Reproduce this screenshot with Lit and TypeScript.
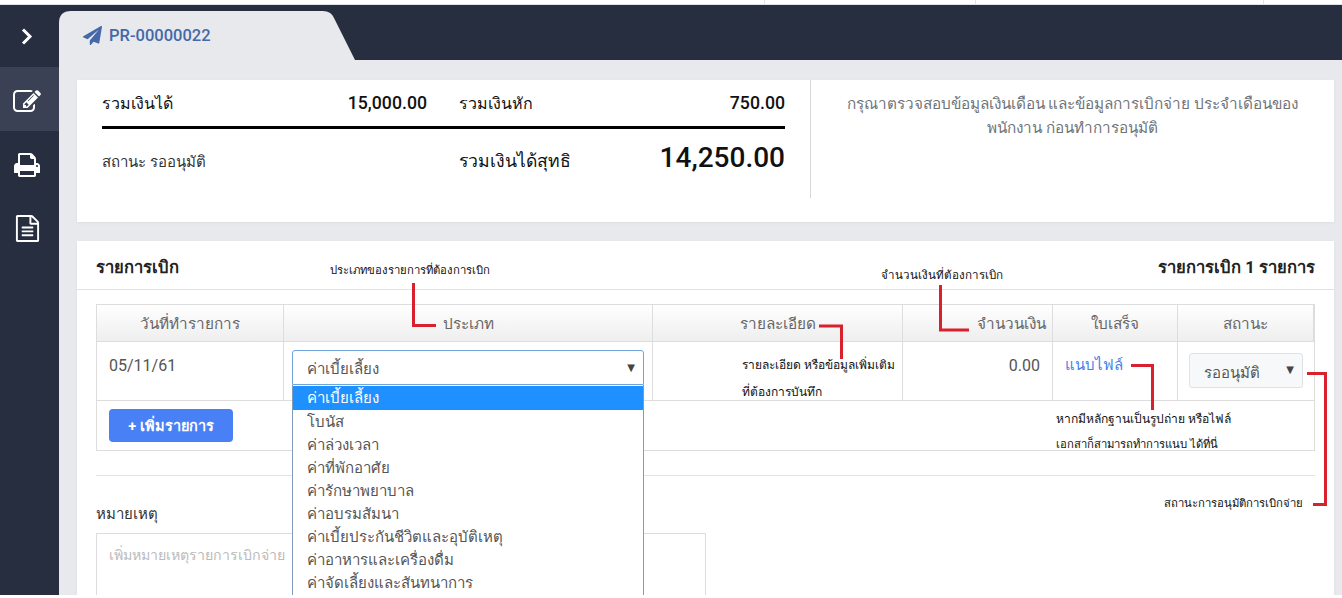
import { LitElement, html, css, svg } from "lit";
import { customElement } from "lit/decorators.js";

const OPTIONS = ["ค่าเบี้ยเลี้ยง","โบนัส","ค่าล่วงเวลา","ค่าที่พักอาศัย","ค่ารักษาพยาบาล","ค่าอบรมสัมนา","ค่าเบี้ยประกันชีวิตและอุบัติเหตุ","ค่าอาหารและเครื่องดื่ม","ค่าจัดเลี้ยงและสันทนาการ"];

const NOTES = [
  { x: 330, y: 261, s: 11.3, t: "ประเภทของรายการที่ต้องการเบิก" },
  { x: 881, y: 267, s: 11.6, t: "จำนวนเงินที่ต้องการเบิก" },
  { x: 742, y: 356, s: 12, t: "รายละเอียด หรือข้อมูลเพิ่มเติม" },
  { x: 742, y: 383, s: 12, t: "ที่ต้องการบันทึก" },
  { x: 1056, y: 410, s: 12.1, t: "หากมีหลักฐานเป็นรูปถ่าย หรือไฟล์" },
  { x: 1056, y: 435, s: 11.3, t: "เอกสาก็สามารถทำการแนบ ได้ที่นี่" },
  { x: 1164, y: 494, s: 11.3, t: "สถานะการอนุมัติการเบิกจ่าย" },
];

const LINES = [
  "413.5,283 413.5,325.5 436,325.5",
  "940.5,285 940.5,330 969,330",
  "819,326 841.5,326 841.5,359",
  "1131,365.5 1152.5,365.5 1152.5,410",
  "1307,373.5 1325.5,373.5 1325.5,504.5 1313,504.5",
];

@customElement("app-root")
export class AppRoot extends LitElement {
  static styles = css`
    :host { display: block; position: relative; width: 1342px; height: 598px; overflow: hidden; background: #fff;
      font-family: Roboto, "Noto Sans", sans-serif; color: #333; }
    .strip { height: 5px; box-sizing: border-box; border-bottom: 1px solid #dfe2e6; display: grid; grid-template-columns: 765px 211px 288px 1fr; }
    .strip i { border-right: 1px solid #dfe2e6; }
    .app { display: flex; height: 590px; overflow: hidden; }
    .side { width: 59px; flex: none; background: #272e40; display: flex; flex-direction: column; color: #fff; }
    .side div { height: 64px; box-sizing: border-box; display: flex; align-items: center; justify-content: center; padding: 4px 5px 0 0; }
    .side .toggle { height: 62px; padding-top: 0; }
    .side .on { background: #3a4155; padding-top: 5px; }
    .side .doc { padding-top: 2px; }
    .side svg { fill: #fff; }
    .main { flex: 1; min-width: 0; display: flex; flex-direction: column; background: #e7e9ed; }
    .tabs { height: 55px; flex: none; background: #272e40; display: flex; align-items: flex-end; }
    .tab { width: 296px; height: 49px; background: #e7e9ed; box-sizing: border-box; padding: 0 0 0 24px; display: flex; align-items: center; gap: 7px;
      clip-path: path("M0 49 L0 12 Q0 0 12 0 L264 0 Q272 0 275 7 L296 49 Z");
      color: #4468a8; font-weight: 500; font-size: 16.5px; }
    .tab svg { fill: #4468a8; }
    .content { flex: 1; padding: 20px 8px 0 18px; display: flex; flex-direction: column; gap: 19px; overflow: hidden; }
    .card { background: #fff; box-shadow: 0 1px 3px rgba(0,0,0,.05); }
    .sum { height: 142px; flex: none; display: flex; align-items: flex-start; }
    .sum-left { width: 683px; height: 118px; padding: 0 25px; display: grid; grid-template-columns: 325px 326px; column-gap: 32px; grid-template-rows: 46px 3px 1fr; align-content: start; flex: none; }
    .sum-right { flex: 1; height: 118px; box-sizing: border-box; border-left: 1px solid #d8d8d8; padding: 12px 29px 0; text-align: center; font-size: 15.3px; line-height: 24px; color: #6f7479; }
    .kv { display: flex; justify-content: space-between; align-items: center; color: #111; font-size: 16px; }
    .kv b { font-weight: 500; font-size: 17.7px; }
    .kv b.big { font-size: 28px; margin-top: -6px; }
    .rule { grid-column: 1 / 3; background: #000; }
    .kv2 { height: 62px; }
    .kv2 span.st { color: #333; font-size: 15px; margin-top: 4px; }
    .kv2 span.net { font-size: 17.6px; margin-top: 2px; }
    .list { flex: 1; display: flex; flex-direction: column; }
    .list-head { height: 49px; flex: none; box-sizing: border-box; border-bottom: 1px solid #e2e2e2; padding: 3px 19px 0; display: flex; justify-content: space-between; align-items: center; font-weight: 700; font-size: 16.6px; color: #222; }
    .list-body { padding: 14px 19px 0; }
    .table { border: 1px solid #ddd; width: 1219px; box-sizing: border-box; }
    .cols { display: grid; grid-template-columns: 187px 369px 250px 150px 125px 1fr; }
    .th { height: 37px; box-sizing: border-box; display: flex; align-items: center; justify-content: center; font-size: 15.3px; color: #666; background: linear-gradient(#fff, #eee); border-right: 1px solid #ddd; border-bottom: 1px solid #ddd; }
    .th:last-child, .td:last-child { border-right: 0; }
    .th.r { justify-content: flex-end; padding-right: 6px; }
    .td { height: 59px; box-sizing: border-box; border-right: 1px solid #ddd; border-bottom: 1px solid #ddd; font-size: 16px; color: #555; }
    .td.date { padding: 14px 12px; }
    .td.sel { padding: 8px 8px 0 8px; position: relative; }
    .td.amt { padding: 14px 12px 0 0; text-align: right; }
    .td.file { padding: 11px 12px 0; color: #4a7ee8; font-size: 15px; }
    .td.stat { padding: 11px 11px 0; }
    .select { height: 35px; box-sizing: border-box; border: 1px solid #6ea6dc; border-radius: 3px 3px 0 0; display: flex; align-items: center; justify-content: space-between; padding: 3px 8px 0 14px; font-size: 15px; color: #555; background: #fff; }
    .arrow { font-size: 10px; color: #444; font-family: "DejaVu Sans", sans-serif; margin-top: -3px; }
    .select.status { border: 1px solid #e0e2e6; border-radius: 3px; background: #f7f8fa; padding: 5px 8px 0 14px; }
    .select.status .arrow { margin-top: -7px; }
    .menu { position: absolute; left: 8px; right: 8px; top: 43px; height: 300px; box-sizing: border-box; border: 1px solid #7f9db9; border-top: 0; background: #fff; font-size: 15px; color: #555; z-index: 2; padding-top: 1px; }
    .menu div { height: 23px; line-height: 25px; padding-left: 14px; }
    .menu div.hl { background: #1e90ff; color: #fff; height: 24px; line-height: 25px; }
    .foot { height: 49px; box-sizing: border-box; padding: 8px 12px 0; }
    .btn { width: 124px; height: 33px; border-radius: 4px; background: #4a80f5; color: #fff; font-size: 14.5px; font-weight: 700; display: flex; align-items: center; justify-content: center; }
    .hr { height: 1px; background: #e4e4e4; margin-top: 24px; }
    .label { margin-top: 26px; font-size: 15px; color: #333; height: 31px; }
    .ta { width: 610px; height: 100px; box-sizing: border-box; border: 1px solid #ddd; padding: 10px 12px; font-size: 14.2px; color: #bbb; }
    .layer { position: absolute; inset: 0; pointer-events: none; z-index: 5; }
    .layer svg { position: absolute; inset: 0; }
    .note { position: absolute; line-height: 18px; color: #111; white-space: nowrap; font-family: "Liberation Serif", serif; }
  `;

  render() {
    return html`
      <div class="strip"><i></i><i></i><i></i><span></span></div>
      <div class="app">
        <nav class="side">
          <div class="toggle">
            <svg width="12" height="17" viewBox="0 0 12 17"><path d="M2 1.500 L9 8.500 L2 15.500" style="fill:none" stroke="#fff" stroke-width="3"/></svg>
          </div>
          <div class="on">
            <svg width="28" height="28" viewBox="0 0 1792 1792"><path d="M888 1184l116-116-152-152-116 116v56h96v96h56zm440-720q-16-16-33 1l-350 350q-17 17-1 33t33-1l350-350q17-17 1-33zm80 594v190q0 119-84.500 203.500t-203.500 84.500h-832q-119 0-203.500-84.500t-84.500-203.500v-832q0-119 84.500-203.500t203.500-84.500h832q63 0 117 25 15 7 18 23 3 17-9 29l-49 49q-14 14-32 8-23-6-45-6h-832q-66 0-113 47t-47 113v832q0 66 47 113t113 47h832q66 0 113-47t47-113v-126q0-13 9-22l64-64q15-15 35-7t20 29zm-96-738l288 288-672 672h-288v-288zm444 132l-92 92-288-288 92-92q28-28 68-28t68 28l152 152q28 28 28 68t-28 68z"/></svg>
          </div>
          <div>
            <svg width="28" height="28" viewBox="0 0 1792 1792"><path d="M448 1536h896v-256h-896v256zm0-640h896v-384h-160q-40 0-68-28t-28-68v-160h-640v640zm1152 64q0-26-19-45t-45-19-45 19-19 45 19 45 45 19 45-19 19-45zm128 0v416q0 13-9.500 22.500t-22.500 9.500h-224v160q0 40-28 68t-68 28h-960q-40 0-68-28t-28-68v-160h-224q-13 0-22.500-9.500t-9.500-22.500v-416q0-79 56.500-135.500t135.500-56.500h64v-544q0-40 28-68t68-28h672q40 0 88 20t76 48l152 152q28 28 48 76t20 88v256h64q79 0 135.500 56.500t56.500 135.500z"/></svg>
          </div>
          <div class="doc">
            <svg width="27" height="27" viewBox="0 0 1792 1792"><path d="M1596 380q28 28 48 76t20 88v1152q0 40-28 68t-68 28h-1344q-40 0-68-28t-28-68v-1600q0-40 28-68t68-28h896q40 0 88 20t76 48zm-444-244v376h376q-10-29-22-41l-313-313q-12-12-41-22zm384 1528v-1024h-416q-40 0-68-28t-28-68v-416h-768v1536h1280zm-1024-864q0-14 9-23t23-9h704q14 0 23 9t9 23v64q0 14-9 23t-23 9h-704q-14 0-23-9t-9-23v-64zm736 224q14 0 23 9t9 23v64q0 14-9 23t-23 9h-704q-14 0-23-9t-9-23v-64q0-14 9-23t23-9h704zm0 256q14 0 23 9t9 23v64q0 14-9 23t-23 9h-704q-14 0-23-9t-9-23v-64q0-14 9-23t23-9h704z"/></svg>
          </div>
        </nav>
        <div class="main">
          <div class="tabs">
            <div class="tab">
              <svg width="19" height="19" viewBox="0 0 1792 1792"><path d="M1764 11q33 24 27 64l-256 1536q-5 29-32 45-14 8-31 8-11 0-24-5l-453-185-242 295q-18 23-49 23-13 0-22-4-19-7-30.500-23.500t-11.500-36.500v-349l864-1059-1069 925-395-162q-37-14-40-55-2-40 32-59l1664-960q15-9 32-9 20 0 36 11z"/></svg>
              <span>PR-00000022</span>
            </div>
          </div>
          <div class="content">
            <section class="card sum">
              <div class="sum-left">
                <div class="kv"><span>รวมเงินได้</span><b>15,000.00</b></div>
                <div class="kv"><span>รวมเงินหัก</span><b>750.00</b></div>
                <div class="rule"></div>
                <div class="kv kv2"><span class="st">สถานะ รออนุมัติ</span></div>
                <div class="kv kv2"><span class="net">รวมเงินได้สุทธิ</span><b class="big">14,250.00</b></div>
              </div>
              <div class="sum-right">กรุณาตรวจสอบข้อมูลเงินเดือน และข้อมูลการเบิกจ่าย ประจำเดือนของพนักงาน ก่อนทำการอนุมัติ</div>
            </section>
            <section class="card list">
              <div class="list-head"><span>รายการเบิก</span><span>รายการเบิก 1 รายการ</span></div>
              <div class="list-body">
                <div class="table">
                  <div class="cols">
                    <div class="th">วันที่ทำรายการ</div>
                    <div class="th">ประเภท</div>
                    <div class="th">รายละเอียด</div>
                    <div class="th r">จำนวนเงิน</div>
                    <div class="th">ใบเสร็จ</div>
                    <div class="th">สถานะ</div>
                    <div class="td date">05/11/61</div>
                    <div class="td sel">
                      <div class="select"><span>ค่าเบี้ยเลี้ยง</span><span class="arrow">▼</span></div>
                      <div class="menu">${OPTIONS.map((o, i) => html`<div class=${i === 0 ? "hl" : ""}>${o}</div>`)}</div>
                    </div>
                    <div class="td"></div>
                    <div class="td amt">0.00</div>
                    <div class="td file">แนบไฟล์</div>
                    <div class="td stat"><div class="select status"><span>รออนุมัติ</span><span class="arrow">▼</span></div></div>
                  </div>
                  <div class="foot"><div class="btn">+ เพิ่มรายการ</div></div>
                </div>
                <div class="hr"></div>
                <div class="label">หมายเหตุ</div>
                <div class="ta">เพิ่มหมายเหตุรายการเบิกจ่าย</div>
              </div>
            </section>
          </div>
        </div>
      </div>
      <div class="layer">
        <svg width="1342" height="598">${LINES.map((p) => svg`<polyline points=${p} fill="none" stroke="#d9202e" stroke-width="3"/>`)}</svg>
        ${NOTES.map((n) => html`<div class="note" style="left:${n.x}px;top:${n.y}px;font-size:${n.s}px">${n.t}</div>`)}
      </div>
    `;
  }
}
